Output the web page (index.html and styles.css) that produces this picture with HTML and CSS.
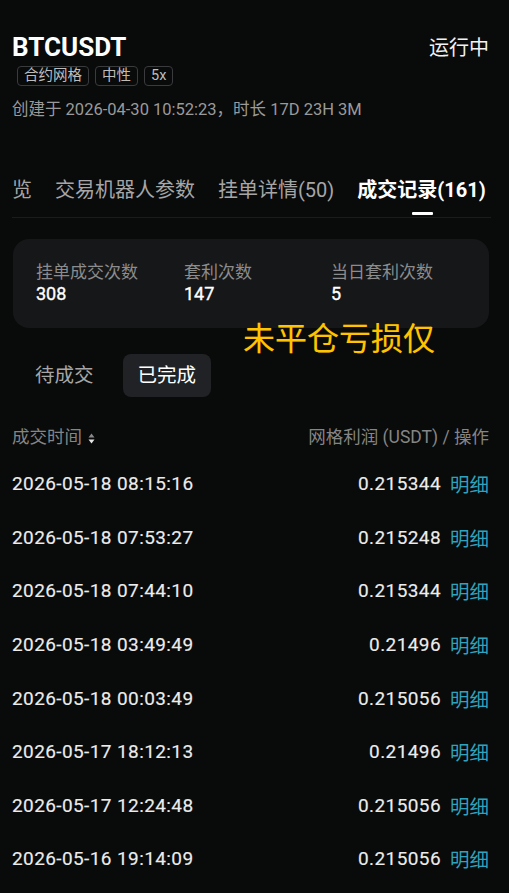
FILE: index.html
```html
<!DOCTYPE html>
<html lang="zh-CN">
<head>
  <meta charset="UTF-8">
  <title>BTCUSDT 成交记录</title>
  <meta name="viewport" content="width=device-width, initial-scale=1">
  <link rel="stylesheet" href="styles.css">
</head>
<body>
  <div class="page">
    <div class="head">
      <div class="head-left">
        <h1 class="symbol">BTCUSDT</h1>
        <div class="tags">
          <span class="tag">合约网格</span>
          <span class="tag">中性</span>
          <span class="tag">5x</span>
        </div>
      </div>
      <div class="status">运行中</div>
    </div>
    <p class="created">创建于 2026-04-30 10:52:23，时长 17D 23H 3M</p>

    <div class="tabs">
      <span class="tab">览</span>
      <span class="tab">交易机器人参数</span>
      <span class="tab">挂单详情(50)</span>
      <span class="tab active">成交记录(161)</span>
    </div>

    <div class="stats-wrap">
      <div class="stats">
        <div class="stat">
          <div class="stat-label">挂单成交次数</div>
          <div class="stat-value">308</div>
        </div>
        <div class="stat">
          <div class="stat-label">套利次数</div>
          <div class="stat-value">147</div>
        </div>
        <div class="stat">
          <div class="stat-label">当日套利次数</div>
          <div class="stat-value">5</div>
        </div>
      </div>
      <div class="note">未平仓亏损仅</div>
    </div>

    <div class="segments">
      <span class="seg">待成交</span>
      <span class="seg active">已完成</span>
    </div>

    <div class="list-head">
      <span class="sort">成交时间
        <svg width="7" height="11" viewBox="0 0 7 11"><path d="M3.5 0.5L6.5 4.5H0.5Z" fill="#8a8a8a"/><path d="M3.5 10.5L6.5 6.5H0.5Z" fill="#e6e6e6"/></svg>
      </span>
      <span>网格利润 (USDT) / 操作</span>
    </div>

    <ul class="rows">
      <li class="row"><span class="time">2026-05-18 08:15:16</span><span class="profit">0.215344</span><a class="detail">明细</a></li>
      <li class="row"><span class="time">2026-05-18 07:53:27</span><span class="profit">0.215248</span><a class="detail">明细</a></li>
      <li class="row"><span class="time">2026-05-18 07:44:10</span><span class="profit">0.215344</span><a class="detail">明细</a></li>
      <li class="row"><span class="time">2026-05-18 03:49:49</span><span class="profit">0.21496</span><a class="detail">明细</a></li>
      <li class="row"><span class="time">2026-05-18 00:03:49</span><span class="profit">0.215056</span><a class="detail">明细</a></li>
      <li class="row"><span class="time">2026-05-17 18:12:13</span><span class="profit">0.21496</span><a class="detail">明细</a></li>
      <li class="row"><span class="time">2026-05-17 12:24:48</span><span class="profit">0.215056</span><a class="detail">明细</a></li>
      <li class="row"><span class="time">2026-05-16 19:14:09</span><span class="profit">0.215056</span><a class="detail">明细</a></li>
    </ul>
  </div>
</body>
</html>
```

FILE: styles.css
```css
* {
  box-sizing: border-box;
}

body {
  margin: 0;
  background: #090a0a;
  color: #f2f2f2;
  font-family: Roboto, "Noto Sans CJK SC", sans-serif;
  overflow: hidden;
}

.page {
  padding: 32px 20px 0 12px;
}

.head {
  display: flex;
  justify-content: space-between;
  align-items: flex-start;
}

.symbol {
  margin: 0;
  font-size: 26px;
  line-height: 30px;
  font-weight: 700;
  color: #fff;
}

.tags {
  display: flex;
  gap: 6px;
  margin: 4px 0 0 5px;
}

.tag {
  font-size: 14.5px;
  line-height: 18px;
  padding: 0 6px;
  border: 1px solid #3a3b3d;
  border-radius: 4px;
  color: #bdbdbd;
}

.status {
  font-size: 20px;
  line-height: 28px;
  margin-top: 2px;
  color: #f2f2f2;
}

.created {
  margin: 13px 0 0;
  font-size: 16.5px;
  line-height: 22px;
  color: #9a9a9a;
}

/* tabs */
.tabs {
  display: flex;
  gap: 23px;
  margin-top: 56px;
  padding-bottom: 14px;
  border-bottom: 1px solid #1a1b1c;
  margin-right: -2px;
}

.tab {
  position: relative;
  font-size: 20px;
  line-height: 26px;
  color: #a6a6a6;
  white-space: nowrap;
}

.tab.active {
  color: #fff;
  font-weight: 700;
}

.tab.active::after {
  content: "";
  position: absolute;
  left: 50%;
  bottom: -12px;
  width: 21px;
  height: 3px;
  margin-left: -10px;
  background: #fff;
  border-radius: 1px;
}

/* stats card */
.stats-wrap {
  position: relative;
  margin: 21px 0 0 1px;
}

.stats {
  display: grid;
  grid-template-columns: 148px 147px 1fr;
  background: #161719;
  border-radius: 16px;
  padding: 22px 23px 23px;
}

.stat-label {
  font-size: 17px;
  line-height: 22px;
  color: #8c8c8c;
}

.stat-value {
  font-size: 18px;
  line-height: 22px;
  color: #fff;
  -webkit-text-stroke: 0.35px #fff;
}

.note {
  position: absolute;
  left: 230px;
  top: 80px;
  font-size: 32px;
  line-height: 40px;
  color: #ffc400;
  text-shadow: 0 0 1px #5a3a00;
  white-space: nowrap;
}

/* segments */
.segments {
  display: flex;
  align-items: center;
  gap: 16px;
  margin-top: 26px;
}

.seg {
  font-size: 19.5px;
  line-height: 43px;
  padding: 0 15px;
  color: #a6a6a6;
  border-radius: 8px;
}

.seg:first-child {
  padding: 0 13px 0 23px;
}

.seg.active {
  background: #212225;
  color: #fff;
}

/* list */
.list-head {
  display: flex;
  justify-content: space-between;
  margin-top: 29px;
  font-size: 17.5px;
  line-height: 22px;
  color: #858585;
}

.sort svg {
  margin-left: 2px;
  vertical-align: -1px;
}

.rows {
  list-style: none;
  margin: 9px 0 0;
  padding: 0;
}

.row {
  display: flex;
  align-items: center;
  height: 53.6px;
  font-size: 19px;
  color: #ececec;
}

.time,
.profit {
  letter-spacing: 0.4px;
  -webkit-text-stroke: 0.15px #ececec;
}

.time {
  flex: 1;
}

.detail {
  margin-left: 9px;
  color: #2ea3bd;
  font-size: 19.5px;
}
```
